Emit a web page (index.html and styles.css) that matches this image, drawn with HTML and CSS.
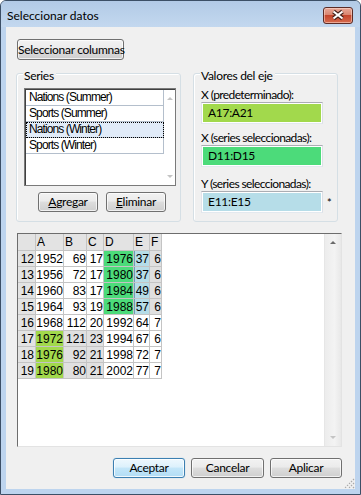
FILE: index.html
```html
<!DOCTYPE html>
<html lang="es">
<head>
<meta charset="UTF-8">
<title>Seleccionar datos</title>
<link rel="stylesheet" href="styles.css">
</head>
<body>
<div class="window">
  <div class="titlebar">
    <span class="title">Seleccionar datos</span>
    <button class="close" title="Cerrar">
      <svg width="28" height="15" viewBox="0 0 28 15">
        <path d="M9.5 3.5 L18.5 10.5 M18.5 3.5 L9.5 10.5" stroke="#43201a" stroke-width="4.2" fill="none"/>
        <path d="M9.5 3.5 L18.5 10.5 M18.5 3.5 L9.5 10.5" stroke="#fff" stroke-width="2.2" fill="none"/>
      </svg>
    </button>
  </div>

  <div class="client">
    <button class="btn btn-cols">Seleccionar columnas</button>

    <div class="groups">
      <div class="group group-series">
        <div class="group-title">Series</div>
        <div class="listbox">
          <ul class="list-items">
            <li>Nations (Summer)</li>
            <li>Sports (Summer)</li>
            <li class="selected">Nations (Winter)</li>
            <li>Sports (Winter)</li>
          </ul>
          <div class="vscroll vscroll-list">
            <span class="arrow arrow-up"></span>
            <span class="arrow arrow-down"></span>
          </div>
        </div>
        <div class="list-buttons">
          <button class="btn btn-small"><u>A</u>gregar</button>
          <button class="btn btn-small"><u>E</u>liminar</button>
        </div>
      </div>

      <div class="group group-axis">
        <div class="group-title">Valores del eje</div>
        <div class="field-label first">X (predeterminado):</div>
        <div class="field-row">
          <div class="field"><div class="fill lime">A17:A21</div></div>
        </div>
        <div class="field-label second">X (series seleccionadas):</div>
        <div class="field-row">
          <div class="field"><div class="fill green">D11:D15</div></div>
        </div>
        <div class="field-label third">Y (series seleccionadas):</div>
        <div class="field-row">
          <div class="field"><div class="fill blue">E11:E15</div></div>
          <span class="star">*</span>
        </div>
      </div>
    </div>

    <div class="sheet">
      <div class="cells">
        <div class="hd"></div><div class="hd">A</div><div class="hd">B</div><div class="hd">C</div><div class="hd">D</div><div class="hd">E</div><div class="hd">F</div>

        <div class="rh">12</div><div>1952</div><div>69</div><div>17</div><div class="green">1976</div><div class="blue">37</div><div class="gray">6</div>
        <div class="rh">13</div><div>1956</div><div>72</div><div>17</div><div class="green">1980</div><div class="blue">37</div><div class="gray">6</div>
        <div class="rh">14</div><div>1960</div><div>83</div><div>17</div><div class="green">1984</div><div class="blue">49</div><div class="gray">6</div>
        <div class="rh">15</div><div>1964</div><div>93</div><div>19</div><div class="green">1988</div><div class="blue">57</div><div class="gray">6</div>
        <div class="rh">16</div><div>1968</div><div>112</div><div>20</div><div>1992</div><div>64</div><div>7</div>
        <div class="rh">17</div><div class="lime">1972</div><div class="gray">121</div><div class="gray">23</div><div>1994</div><div>67</div><div>6</div>
        <div class="rh">18</div><div class="lime">1976</div><div class="gray">92</div><div class="gray">21</div><div>1998</div><div>72</div><div>7</div>
        <div class="rh">19</div><div class="lime">1980</div><div class="gray">80</div><div class="gray">21</div><div>2002</div><div>77</div><div>7</div>
      </div>
      <div class="vscroll vscroll-sheet">
        <span class="arrow arrow-up dark"></span>
        <span class="arrow arrow-down"></span>
      </div>
    </div>

    <div class="dialog-buttons">
      <button class="btn btn-dialog default">Aceptar</button>
      <button class="btn btn-dialog wide">Cancelar</button>
      <button class="btn btn-dialog">Aplicar</button>
    </div>

    <!-- size grip in the corner -->
    <svg class="grip" width="11" height="11" viewBox="0 0 11 11">
      <path d="M10 1 L1 10 M10 5 L5 10 M10 9 L9 10" stroke="#a9a9a9" stroke-width="1.2" stroke-dasharray="1.4 1.4" fill="none"/>
    </svg>
  </div>
</div>
</body>
</html>
```

FILE: styles.css
```css
body {
  margin: 0;
  font-family: Lato, "Noto Sans", sans-serif;
  font-size: 12px;
  color: #000;
}

.window {
  width: 361px;
  height: 495px;
  box-sizing: border-box;
  border: 1px solid #3c4f66;
  border-radius: 6px 6px 0 0;
  background: #bdd4ee;
  padding: 0 5px 5px;
  display: flex;
  flex-direction: column;
}

/* title bar */
.titlebar {
  height: 26px;
  margin: 0 -5px;
  padding: 0 7px 0 6px;
  display: flex;
  justify-content: space-between;
  align-items: flex-start;
  background: linear-gradient(#b2cae6, #c3d8ef);
  border-radius: 5px 5px 0 0;
}

.title {
  padding-top: 7px;
  line-height: 15px;
}

.close {
  margin-top: 6px;
  width: 30px;
  height: 17px;
  padding: 0;
  border: 1px solid #5b2b26;
  border-radius: 3px;
  background: linear-gradient(#e8a898 0%, #d98570 45%, #c5452c 50%, #d66b4e 100%);
  box-shadow: inset 0 0 0 1px rgba(255, 220, 210, 0.55);
  display: flex;
  align-items: center;
  justify-content: center;
}

/* client area */
.client {
  flex: 1;
  position: relative;
  background: #f0f0f0;
  padding: 12px 13px 0 11px;
  letter-spacing: -0.3px;
}

.btn {
  font: inherit;
  letter-spacing: inherit;
  color: #000;
  height: 20px;
  padding: 0;
  border: 1px solid #707070;
  border-radius: 3px;
  background: linear-gradient(#f2f2f2 0%, #ebebeb 45%, #dddddd 50%, #cfcfcf 100%);
  box-shadow: inset 0 0 0 1px rgba(255, 255, 255, 0.7);
  line-height: 16px;
  white-space: nowrap;
}

.btn-cols {
  display: block;
  width: 107px;
  height: 21px;
}

.groups {
  display: flex;
  gap: 12px;
  margin: 13px 0 0 -1px;
}

.group {
  height: 149px;
  box-sizing: border-box;
  border: 1px solid #d5dfe5;
  border-radius: 3px;
  box-shadow: inset 1px 1px 0 #fff;
  padding-left: 7px;
}

.group-series { width: 165px; }
.group-axis { width: 145px; }

.group-title {
  width: fit-content;
  margin: -6px 0 0 -1px;
  padding: 0 2px 0 1px;
  line-height: 15px;
  background: #f0f0f0;
}

/* series list */
.listbox {
  width: 152px;
  height: 98px;
  box-sizing: border-box;
  margin-top: 5px;
  border: 1px solid #7a7a7a;
  box-shadow: inset 1px 1px 0 #404040;
  background: #fff;
  display: flex;
}

.list-items {
  margin: 1px 0 0 1px;
  padding: 0;
  list-style: none;
  width: 138px;
  font-family: "Liberation Sans", Arial, sans-serif;
  font-size: 12px;
  letter-spacing: -0.9px;
}

.list-items li {
  height: 15px;
  line-height: 15px;
  padding-left: 3px;
  border-bottom: 1px solid #b4bfcc;
  border-right: 1px solid #b4bfcc;
}

.list-items li.selected {
  background: #e1ebf8;
  outline: 1px dotted #000;
  outline-offset: -1px;
}

.vscroll {
  display: flex;
  flex-direction: column;
  justify-content: space-between;
  align-items: center;
}

.vscroll-list {
  flex: 1;
  padding: 8px 0 7px;
}

.arrow {
  width: 0;
  height: 0;
  border-left: 3px solid transparent;
  border-right: 3px solid transparent;
}

.arrow-up { border-bottom: 3px solid #c4c4c4; }
.arrow-down { border-top: 3px solid #c4c4c4; }
.arrow-up.dark { border-bottom-color: #6a6a6a; }

.list-buttons {
  display: flex;
  gap: 8px;
  margin: 6px 0 0 14px;
}

.btn-small { width: 60px; }

/* axis fields */
.field-label {
  line-height: 15px;
  height: 15px;
  white-space: nowrap;
  letter-spacing: -0.6px;
}

.field-label.first { margin-top: 4px; }
.field-label.second { margin-top: 6px; }
.field-label.third { margin-top: 9px; }

.field-row {
  display: flex;
  align-items: center;
}

.field {
  width: 122px;
  height: 22px;
  box-sizing: border-box;
  border: 1px solid;
  border-color: #abadb3 #dbdfe6 #e3e9ef #e2e3ea;
  background: #fff;
  padding: 1px;
}

.fill {
  height: 100%;
  padding-left: 5px;
  line-height: 18px;
}

.star {
  margin-left: 4px;
  font-size: 11px;
  line-height: 11px;
}

.lime { background: #a2d94c; }
.green { background: #4cdb7a; }
.blue { background: #b6dde8; }
.gray { background: #e0e0e0; }

/* worksheet preview */
.sheet {
  margin-top: 11px;
  width: 325px;
  height: 214px;
  box-sizing: border-box;
  border: 1px solid;
  border-color: #6d6d6d #e3e3e3 #e3e3e3 #6d6d6d;
  background: #fff;
  display: flex;
}

.cells {
  align-self: flex-start;
  display: grid;
  grid-template-columns: 17px 27px 22px 16px 29px 15px 11px;
  grid-template-rows: 16px repeat(8, 15px);
  gap: 1px;
  padding: 0 1px 1px 0;
  background: #c4c4c4;
  font-family: "Liberation Sans", Arial, sans-serif;
  font-size: 12px;
  line-height: 16px;
  letter-spacing: 0;
}

.cells div {
  background: #fff;
  text-align: right;
  white-space: nowrap;
  overflow: hidden;
}

.cells .hd {
  background: #e3e3e3;
  text-align: left;
  padding-left: 1px;
}

.cells .rh {
  background: #e3e3e3;
  padding-right: 1px;
}

.cells .green { background: #4cdb7a; }
.cells .lime { background: #a2d94c; }
.cells .gray { background: #e0e0e0; }
.cells .blue {
  background: #b6dde8;
  box-shadow: inset 1px 0 0 #6f9db5;
}

.vscroll-sheet {
  margin-left: auto;
  width: 16px;
  border-left: 1px solid #e6e6e6;
  background: linear-gradient(90deg, #ececec, #f3f3f3 60%, #e8e8e8);
  padding: 7px 0 7px;
}

/* bottom buttons */
.dialog-buttons {
  width: 325px;
  margin-top: 11px;
  display: flex;
  justify-content: flex-end;
  gap: 6px;
}

.btn-dialog { width: 72px; }
.btn-dialog.wide { width: 73px; }

.btn-dialog.default {
  border-color: #3c7fb1;
  background: linear-gradient(#eef8fe 0%, #dcf1fc 45%, #c3e6f9 50%, #b2ddf5 100%);
  box-shadow: inset 0 0 0 1px rgba(255, 255, 255, 0.8), 0 0 1px #7ec3ec;
}

.grip {
  position: absolute;
  right: 0;
  bottom: 0;
}
```
